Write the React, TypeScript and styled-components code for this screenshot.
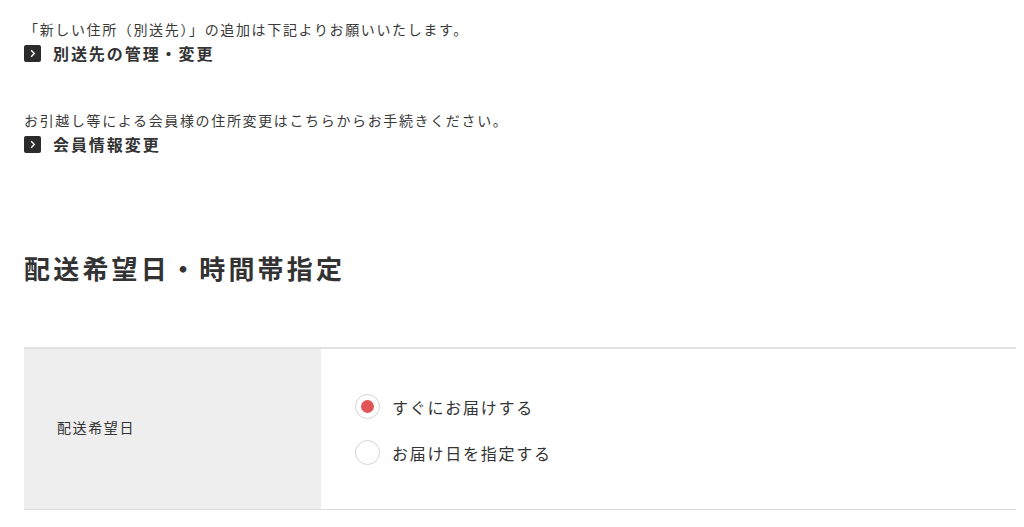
import React from "react";
import styled, { createGlobalStyle } from "styled-components";

const Global = createGlobalStyle`
  html, body { margin: 0; padding: 0; background: #fff; }
  body {
    font-family: "Noto Sans CJK JP", "Noto Sans", sans-serif;
    color: #333;
  }
`;

const Page = styled.div`
  padding: 17px 8px 0 24px;
`;

const Notice = styled.section<{ $gap: number }>`
  margin-bottom: ${(p) => p.$gap}px;
`;

const Lead = styled.p`
  margin: 0;
  font-size: 14px;
  line-height: 24px;
  letter-spacing: 1.64px;
  color: #3a3a3a;
`;

const LinkRow = styled.a`
  display: flex;
  align-items: center;
  gap: 12px;
  height: 24px;
  font-size: 16px;
  font-weight: 700;
  letter-spacing: 1.93px;
  color: #333;
  text-decoration: none;
`;

const ArrowBox = styled.span`
  width: 17px;
  height: 17px;
  border-radius: 2px;
  background: #2b2b2b;
  display: flex;
  align-items: center;
  justify-content: center;
  flex: none;
`;

const Heading = styled.h2`
  margin: 92px 0 59px;
  font-size: 26px;
  line-height: 40px;
  font-weight: 700;
  letter-spacing: 3.2px;
  color: #333;
`;

const Table = styled.div`
  display: grid;
  grid-template-columns: 297px 1fr;
  border-top: 2px solid #e2e2e2;
  border-bottom: 1px solid #dcdcdc;
`;

const HeadCell = styled.div`
  background: #eeeeee;
  display: flex;
  align-items: center;
  box-sizing: border-box;
  padding: 0 0 5px 33px;
  font-size: 14px;
  letter-spacing: 1.6px;
  color: #333;
  height: 160px;
`;

const BodyCell = styled.div`
  display: flex;
  flex-direction: column;
  justify-content: center;
  gap: 20px;
  padding: 1px 0 0 34px;
`;

const RadioLabel = styled.label`
  display: flex;
  align-items: center;
  gap: 12px;
  height: 26px;
  font-size: 16px;
  letter-spacing: 1.75px;
  color: #333;
  cursor: pointer;
`;

const RadioCircle = styled.span<{ $checked: boolean }>`
  width: 25px;
  height: 25px;
  box-sizing: border-box;
  border: 1px solid #d4d4d4;
  border-radius: 50%;
  background: #fff;
  display: flex;
  align-items: center;
  justify-content: center;
  flex: none;
  &::after {
    content: "";
    width: 13px;
    height: 13px;
    border-radius: 50%;
    background: ${(p) => (p.$checked ? "#e05656" : "transparent")};
  }
`;

const Chevron = () => (
  <svg width="9" height="9" viewBox="0 0 10 10" aria-hidden>
    <path d="M3.5 1.5 L7 5 L3.5 8.5" fill="none" stroke="#fff" strokeWidth="1.6" />
  </svg>
);

const options = [
  { label: "すぐにお届けする", checked: true },
  { label: "お届け日を指定する", checked: false },
];

export default function App() {
  return (
    <>
      <Global />
      <Page>
        <Notice $gap={43}>
          <Lead>「新しい住所（別送先）」の追加は下記よりお願いいたします。</Lead>
          <LinkRow href="#">
            <ArrowBox>
              <Chevron />
            </ArrowBox>
            別送先の管理・変更
          </LinkRow>
        </Notice>
        <Notice $gap={0}>
          <Lead>お引越し等による会員様の住所変更はこちらからお手続きください。</Lead>
          <LinkRow href="#">
            <ArrowBox>
              <Chevron />
            </ArrowBox>
            会員情報変更
          </LinkRow>
        </Notice>
        <Heading>配送希望日・時間帯指定</Heading>
        <Table>
          <HeadCell>配送希望日</HeadCell>
          <BodyCell>
            {options.map((o) => (
              <RadioLabel key={o.label}>
                <RadioCircle $checked={o.checked} />
                {o.label}
              </RadioLabel>
            ))}
          </BodyCell>
        </Table>
      </Page>
    </>
  );
}
